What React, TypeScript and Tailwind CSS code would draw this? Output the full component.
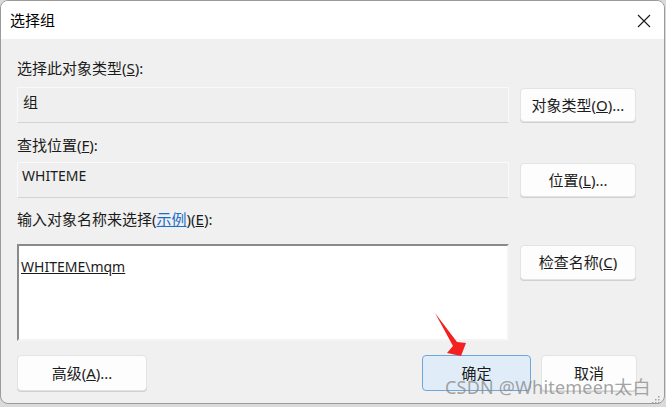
const font = { fontFamily: '"Noto Sans", "Noto Sans CJK SC", sans-serif' };

const Btn = ({ children, className = "" }: { children: React.ReactNode; className?: string }) => (
  <div
    className={`flex items-center justify-center rounded-[4px] border border-[#e3e3e3] bg-[#fdfdfd] text-[15px] text-[#1b1b1b] shadow-[0_1px_0_#d0d0d0] ${className}`}
  >
    {children}
  </div>
);

const App = () => {
  return (
    <div className="relative h-[407px] w-[666px] overflow-hidden bg-[#dadada]" style={font}>
      {/* dialog window */}
      <div className="flex h-[404px] w-[665px] flex-col overflow-hidden rounded-[8px] border border-[#9b9b9b] bg-[#f0f0f0]">
        {/* title bar */}
        <div className="flex h-[38px] shrink-0 items-center justify-between bg-white pl-[9px] pr-[13px]">
          <span className="text-[15px] text-black">选择组</span>
          <svg width="14" height="14" viewBox="0 0 14 14" className="mt-[2px]">
            <path d="M1 1 L13 13 M13 1 L1 13" stroke="#1a1a1a" strokeWidth="1.1" fill="none" />
          </svg>
        </div>

        {/* body */}
        <div className="flex flex-col pl-[16px] pr-[27px]">
          <div className="mt-[19px] h-[20px] text-[15px] leading-[20px] text-[#1b1b1b]">
            选择此对象类型(<span className="underline">S</span>):
          </div>
          <div className="mt-[9px] flex items-center gap-[11px]">
            <div className="h-[36px] w-[492px] border border-[#fafafa] border-b-[#d4d4d4] bg-[#efefef] px-[5px] pt-[4px] text-[15px] leading-[20px] text-[#1b1b1b]">
              组
            </div>
            <Btn className="h-[34px] w-[116px]">
              对象类型(<span className="underline">O</span>)...
            </Btn>
          </div>

          <div className="mt-[12px] h-[20px] text-[15px] leading-[20px] text-[#1b1b1b]">
            查找位置(<span className="underline">F</span>):
          </div>
          <div className="mt-[7px] flex items-center gap-[11px]">
            <div className="h-[36px] w-[492px] border border-[#fafafa] border-b-[#d4d4d4] bg-[#efefef] px-[4px] pt-[4px] text-[14px] leading-[18px] text-[#1b1b1b]">
              WHITEME
            </div>
            <Btn className="h-[34px] w-[116px]">
              位置(<span className="underline">L</span>)...
            </Btn>
          </div>

          <div className="mt-[11px] h-[20px] text-[15px] leading-[20px] text-[#1b1b1b]">
            输入对象名称来选择(<span className="text-[#1a6fc9] underline">示例</span>)(<span className="underline">E</span>):
          </div>
          <div className="mt-[15px] flex items-start gap-[11px]">
            <div className="h-[97px] w-[492px] border-2 border-[#8a8a8a] border-b-[#f4f4f4] border-r-[#f4f4f4] bg-white px-[2px] pt-[12px] text-[14px] leading-[18px] text-[#1b1b1b]">
              <span className="underline">WHITEME\mqm</span>
            </div>
            <Btn className="mt-[1px] h-[35px] w-[116px]">
              检查名称(<span className="underline">C</span>)
            </Btn>
          </div>

          <div className="mt-[14px] flex items-center">
            <Btn className="h-[36px] w-[130px]">
              高级(<span className="underline">A</span>)...
            </Btn>
            <div className="flex-1" />
            <div className="flex h-[36px] w-[109px] items-center justify-center rounded-[4px] border border-[#6ea7dc] bg-[#e0edf8] text-[15px] text-[#1b1b1b]">
              确定
            </div>
            <Btn className="ml-[10px] h-[36px] w-[96px]">取消</Btn>
          </div>
        </div>
      </div>

      {/* red annotation arrow and resize grip */}
      <svg className="absolute left-0 top-0" width="666" height="407" viewBox="0 0 666 407">
        <polygon points="435,313 457,342 466,343 461,356 447,353 453,346" fill="#f52020" />
        <g fill="#a0a0a0">
          <rect x="658" y="396" width="1.5" height="1.5" />
          <rect x="655" y="399" width="1.5" height="1.5" />
          <rect x="658" y="399" width="1.5" height="1.5" />
          <rect x="652" y="402" width="1.5" height="1.5" />
          <rect x="655" y="402" width="1.5" height="1.5" />
          <rect x="658" y="402" width="1.5" height="1.5" />
        </g>
      </svg>

      {/* watermark */}
      <div className="absolute left-[445px] top-[376px] text-[18px] leading-[22px] tracking-[0.2px] text-[#8c8c8c]/80">
        CSDN @Whitemeen太白
      </div>
    </div>
  );
};

export default App;
